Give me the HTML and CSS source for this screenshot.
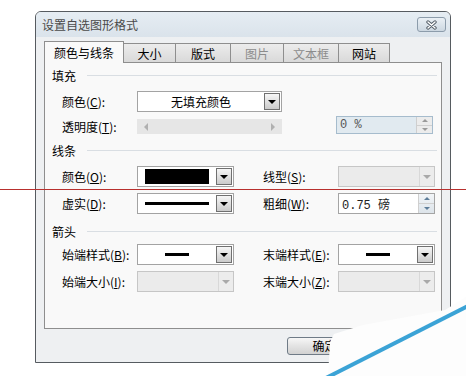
FILE: index.html
```html
<!DOCTYPE html>
<html lang="zh-CN">
<head>
  <meta charset="UTF-8">
  <title>设置自选图形格式</title>
  <link rel="stylesheet" href="styles.css">
</head>
<body>
  <div class="window">
    <div class="titlebar">
      <span class="title">设置自选图形格式</span>
      <span class="close">
        <svg width="13" height="10" viewBox="0 0 13 10">
          <path d="M3,2 L10,8 M10,2 L3,8" stroke="#56606a" stroke-width="3.4" stroke-linecap="round"/>
          <path d="M3,2 L10,8 M10,2 L3,8" stroke="#fff" stroke-width="1.4" stroke-linecap="round"/>
        </svg>
      </span>
    </div>
    <div class="client">
      <div class="tabs">
        <div class="tab active w1">颜色与线条</div>
        <div class="tab w2">大小</div>
        <div class="tab w3">版式</div>
        <div class="tab off w4">图片</div>
        <div class="tab off w5">文本框</div>
        <div class="tab w6">网站</div>
      </div>
      <div class="panel">
        <!-- 填充 -->
        <div class="sec-head"><span>填充</span></div>
        <div class="row r27">
          <span class="lbl">颜色(<u>C</u>):</span>
          <div class="combo wide">
            <span class="val">无填充颜色</span>
            <span class="drop"><i class="tri-down"></i></span>
          </div>
        </div>
        <div class="row r23">
          <span class="lbl">透明度(<u>T</u>):</span>
          <div class="slider"><i class="tri-left"></i><i class="tri-right"></i></div>
          <div class="spin tint">
            <span class="txt">0 %</span>
            <span class="arrows"><span><i class="tri-up sm"></i></span><span><i class="tri-down sm grey"></i></span></span>
          </div>
        </div>

        <!-- 线条 -->
        <div class="sec-head s2"><span>线条</span></div>
        <div class="row r27">
          <span class="lbl">颜色(<u>O</u>):</span>
          <div class="combo">
            <span class="val"><span class="swatch"></span></span>
            <span class="drop"><i class="tri-down"></i></span>
          </div>
          <span class="lbl lbl2">线型(<u>S</u>):</span>
          <div class="combo dis">
            <span class="val"></span>
            <span class="drop"><i class="tri-down"></i></span>
          </div>
        </div>
        <div class="row r27">
          <span class="lbl">虚实(<u>D</u>):</span>
          <div class="combo">
            <span class="val"><span class="line-full"></span></span>
            <span class="drop"><i class="tri-down"></i></span>
          </div>
          <span class="lbl lbl2">粗细(<u>W</u>):</span>
          <div class="spin">
            <span class="txt">0.75 磅</span>
            <span class="arrows blue"><span><i class="tri-up sm"></i></span><span><i class="tri-down sm"></i></span></span>
          </div>
        </div>

        <!-- 箭头 -->
        <div class="sec-head s3"><span>箭头</span></div>
        <div class="row r27">
          <span class="lbl">始端样式(<u>B</u>):</span>
          <div class="combo">
            <span class="val"><span class="line-short"></span></span>
            <span class="drop"><i class="tri-down"></i></span>
          </div>
          <span class="lbl lbl2">末端样式(<u>E</u>):</span>
          <div class="combo">
            <span class="val"><span class="line-short"></span></span>
            <span class="drop"><i class="tri-down"></i></span>
          </div>
        </div>
        <div class="row r27">
          <span class="lbl">始端大小(<u>I</u>):</span>
          <div class="combo dis">
            <span class="val"></span>
            <span class="drop"><i class="tri-down"></i></span>
          </div>
          <span class="lbl lbl2">末端大小(<u>Z</u>):</span>
          <div class="combo dis">
            <span class="val"></span>
            <span class="drop"><i class="tri-down"></i></span>
          </div>
        </div>
      </div>
      <div class="buttons">
        <div class="btn">确定</div>
        <div class="btn">取消</div>
      </div>
    </div>
  </div>

  <!-- red guide line drawn over the screenshot -->
  <div class="guide"></div>

  <!-- torn corner with blue stroke -->
  <svg class="corner" width="466" height="376" viewBox="0 0 466 376">
    <polygon points="328,376 330,342 334,334 363,325 445,310 466,297 466,376" fill="#fdfdfd"/>
    <line x1="326" y1="378" x2="468" y2="306" stroke="#3ba3d6" stroke-width="4"/>
  </svg>
</body>
</html>
```

FILE: styles.css
```css
body {
  margin: 0;
  width: 466px;
  height: 376px;
  overflow: hidden;
  position: relative;
  background: #fff;
  font-family: "Noto Sans CJK SC", sans-serif;
  font-size: 12px;
  color: #000;
}

u {
  text-decoration: underline;
}

.window {
  margin: 11px 0 0 35px;
  width: 416px;
  height: 352px;
  box-sizing: border-box;
  border: 1px solid #565b60;
  border-radius: 6px 6px 0 0;
  background: #eef0f2;
  display: flex;
  flex-direction: column;
}

.titlebar {
  height: 25px;
  display: flex;
  align-items: center;
  justify-content: space-between;
  padding: 0 4px 0 6px;
  background: linear-gradient(#e6edf3, #dae3eb);
  border-radius: 5px 5px 0 0;
}

.title {
  color: #4a4a4a;
  line-height: 14px;
}

.close {
  width: 29px;
  height: 15px;
  box-sizing: border-box;
  border: 1px solid #8c9cab;
  border-radius: 3px;
  background: linear-gradient(#eaf0f5, #ccd7e1);
  display: flex;
  align-items: center;
  justify-content: center;
}

.close svg {
  display: block;
}

.client {
  flex: 1;
  padding: 4px 8px 0;
  display: flex;
  flex-direction: column;
}

/* tabs */
.tabs {
  display: flex;
  align-items: flex-end;
  height: 21px;
}

.tab {
  height: 19px;
  box-sizing: border-box;
  border: 1px solid #8e8e8e;
  border-bottom: none;
  margin-left: -1px;
  background: linear-gradient(#ececec, #d9d9d9);
  display: flex;
  align-items: center;
  justify-content: center;
  line-height: 14px;
  padding-top: 1px;
}

.tab.active {
  height: 22px;
  margin-left: 0;
  margin-bottom: -1px;
  background: #f9f9f9;
  position: relative;
  z-index: 1;
}

.tab.off {
  color: #8c8c8c;
}

.w1 { width: 80px; }
.w2 { width: 53px; }
.w3 { width: 56px; }
.w4 { width: 54px; }
.w5 { width: 56px; }
.w6 { width: 52px; }

/* tab page */
.panel {
  height: 267px;
  box-sizing: border-box;
  border: 1px solid #8e8e8e;
  background: #f9f9f9;
  padding: 2px 4px 0 7px;
}

.sec-head {
  height: 20px;
  display: flex;
  align-items: center;
  margin-bottom: 3px;
}

.sec-head::after {
  content: "";
  flex: 1;
  height: 1px;
  background: #d9dee3;
  margin-left: 11px;
}

.sec-head.s2 {
  margin-top: 2px;
}

.sec-head.s3 {
  margin-top: 4px;
  margin-bottom: 0;
}

.row {
  display: flex;
  align-items: center;
  padding-left: 10px;
}

.r27 { height: 27px; }
.r23 { height: 23px; }

.lbl {
  width: 75px;
  flex: none;
  white-space: nowrap;
  line-height: 14px;
}

.lbl2 {
  margin-left: 29px;
}

/* combo boxes */
.combo {
  width: 97px;
  height: 21px;
  flex: none;
  box-sizing: border-box;
  border: 1px solid #a3a3a3;
  background: #fff;
  display: flex;
  padding: 2px;
}

.combo.wide {
  width: 145px;
}

.combo .val {
  flex: 1;
  display: flex;
  align-items: center;
  justify-content: center;
  line-height: 14px;
  padding-left: 10px;
}

.combo.wide .val {
  padding-left: 0;
}

.combo .drop {
  width: 14px;
  margin: -1px -1px -1px 2px;
  border: 1px solid #707070;
  background: linear-gradient(#f6f6f6, #cbcbcb);
  display: flex;
  align-items: center;
  justify-content: center;
}

.combo.dis {
  background: #ebebeb;
  border-color: #c6c6c6;
}

.combo.dis .drop {
  border: none;
  border-left: 1px solid #d8d8d8;
  background: #ececec;
  margin: -2px -2px -2px 2px;
}

.combo.dis .tri-down {
  border-top-color: #a9a9a9;
}

.swatch {
  display: block;
  width: 100%;
  height: 100%;
  margin-left: -10px;
  background: #000;
}

.line-full {
  display: block;
  width: 100%;
  height: 3px;
  margin-left: -10px;
  background: #000;
}

.line-short {
  display: block;
  width: 24px;
  height: 3px;
  margin-left: -10px;
  background: #000;
}

/* slider */
.slider {
  width: 145px;
  height: 15px;
  flex: none;
  box-sizing: border-box;
  background: #e6e6e6;
  display: flex;
  align-items: center;
  justify-content: space-between;
  padding: 0 7px;
}

/* spin boxes */
.spin {
  width: 97px;
  height: 21px;
  flex: none;
  box-sizing: border-box;
  border: 1px solid #a5a5a5;
  background: #fff;
  display: flex;
}

.spin.tint {
  height: 18px;
  margin-left: 54px;
  margin-top: -3px;
  border-color: #a6bccd;
  background: #e1eaf0;
}

.spin .txt {
  flex: 1;
  display: flex;
  align-items: center;
  padding-left: 3px;
  font-family: "Liberation Mono", "Noto Sans CJK SC", monospace;
  font-size: 12px;
  color: #222;
}

.spin.tint .txt {
  color: #555;
}

.arrows {
  width: 15px;
  display: flex;
  flex-direction: column;
  border-left: 1px solid #cfcfcf;
  background: #ececec;
}

.arrows > span {
  flex: 1;
  display: flex;
  align-items: center;
  justify-content: center;
}

.arrows > span + span {
  border-top: 1px solid #d0d0d0;
}

.arrows.blue {
  background: linear-gradient(#f2f5f8, #dde4ea);
}

.arrows.blue .tri-up {
  border-bottom-color: #5d7d99;
}

.arrows.blue .tri-down {
  border-top-color: #5d7d99;
}

/* triangles */
.tri-down {
  width: 0;
  height: 0;
  border-left: 4px solid transparent;
  border-right: 4px solid transparent;
  border-top: 4px solid #000;
}

.tri-up {
  width: 0;
  height: 0;
  border-left: 3px solid transparent;
  border-right: 3px solid transparent;
  border-bottom: 3px solid #9a9a9a;
}

.tri-down.sm {
  border-left-width: 3px;
  border-right-width: 3px;
  border-top-width: 3px;
}

.tri-down.grey {
  border-top-color: #9a9a9a;
}

.tri-left {
  width: 0;
  height: 0;
  border-top: 4px solid transparent;
  border-bottom: 4px solid transparent;
  border-right: 4px solid #b0b0b0;
}

.tri-right {
  width: 0;
  height: 0;
  border-top: 4px solid transparent;
  border-bottom: 4px solid transparent;
  border-left: 4px solid #b0b0b0;
}

/* dialog buttons */
.buttons {
  display: flex;
  justify-content: flex-end;
  gap: 5px;
  padding-top: 8px;
}

.btn {
  width: 75px;
  height: 18px;
  box-sizing: border-box;
  border: 1px solid #6f7b87;
  border-radius: 3px;
  background: linear-gradient(#f7f7f7, #e3e3e3 50%, #d2d2d2);
  display: flex;
  align-items: center;
  justify-content: center;
  line-height: 14px;
}

/* overlays */
.guide {
  position: absolute;
  left: 0;
  top: 189px;
  width: 466px;
  height: 1px;
  background: #b8302e;
}

.corner {
  position: absolute;
  left: 0;
  top: 0;
  pointer-events: none;
}
```
